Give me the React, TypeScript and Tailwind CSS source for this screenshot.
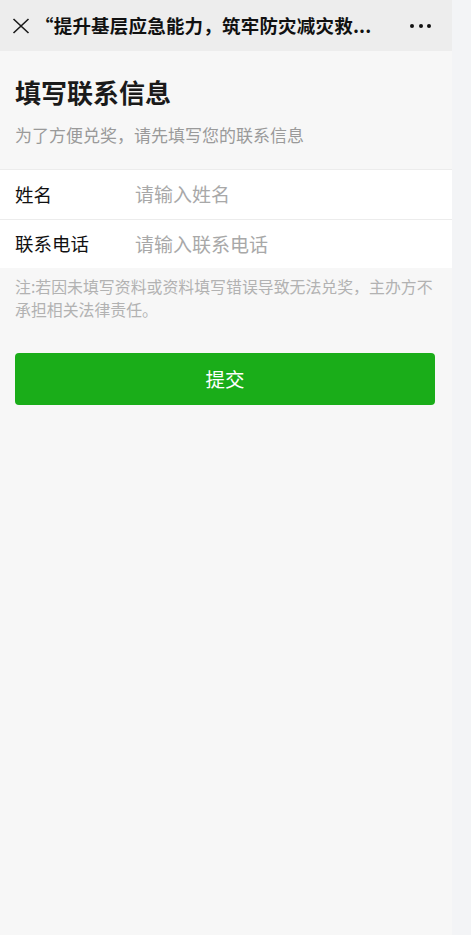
import React from "react";

const font = { fontFamily: '"Noto Sans CJK SC", "Noto Sans", sans-serif' };

export default function App() {
    return (
        <div className="flex min-h-[935px] w-full bg-[#f3f4f6]" style={font}>
            {/* page */}
            <div className="w-[452px] shrink-0 bg-[#f7f7f7] min-h-[935px]">
                {/* top bar */}
                <div className="flex h-[51px] items-center bg-[#ededed] pl-[12px] pr-[21px]">
                    <svg width="18" height="18" viewBox="0 0 18 18" className="shrink-0">
                        <path d="M1.5 2 L16.5 16 M16.5 2 L1.5 16" stroke="#1a1a1a" strokeWidth="1.6" fill="none" />
                    </svg>
                    <div className="ml-[5px] whitespace-nowrap text-[18.5px] font-bold tracking-[0.2px] text-[#111]">
                        “提升基层应急能力，筑牢防灾减灾救...
                    </div>
                    <div className="ml-auto flex gap-[4.5px]">
                        <span className="h-[4px] w-[4px] rounded-full bg-[#111]" />
                        <span className="h-[4px] w-[4px] rounded-full bg-[#111]" />
                        <span className="h-[4px] w-[4px] rounded-full bg-[#111]" />
                    </div>
                </div>

                {/* heading */}
                <div className="px-[15px] pt-[24px]">
                    <h1 className="text-[26px] font-bold leading-[34px] text-[#1a1a1a]">填写联系信息</h1>
                    <p className="mt-[15px] text-[17px] leading-[22px] text-[#9a9a9a]">为了方便兑奖，请先填写您的联系信息</p>
                </div>

                {/* form */}
                <div className="mt-[23px] border-t border-[#ececec] bg-white">
                    <div className="flex h-[50px] items-center border-b border-[#ececec] px-[15px] text-[18.5px]">
                        <span className="w-[120px] text-[#111]">姓名</span>
                        <span className="text-[19px] text-[#a8a8a8]">请输入姓名</span>
                    </div>
                    <div className="flex h-[48px] items-center px-[15px] text-[18.5px]">
                        <span className="w-[120px] text-[#111]">联系电话</span>
                        <span className="text-[19px] text-[#a8a8a8]">请输入联系电话</span>
                    </div>
                </div>

                {/* note */}
                <p className="px-[15px] pt-[7px] text-[15.9px] leading-[23px] text-[#b2b2b2]">
                    注:若因未填写资料或资料填写错误导致无法兑奖，主办方不承担相关法律责任。
                </p>

                {/* submit */}
                <div className="px-[15px] pt-[32px]">
                    <button className="flex h-[52px] w-[420px] items-center justify-center rounded-[4px] bg-[#1aad19] text-[19.5px] text-white">
                        提交
                    </button>
                </div>
            </div>
        </div>
    );
}
